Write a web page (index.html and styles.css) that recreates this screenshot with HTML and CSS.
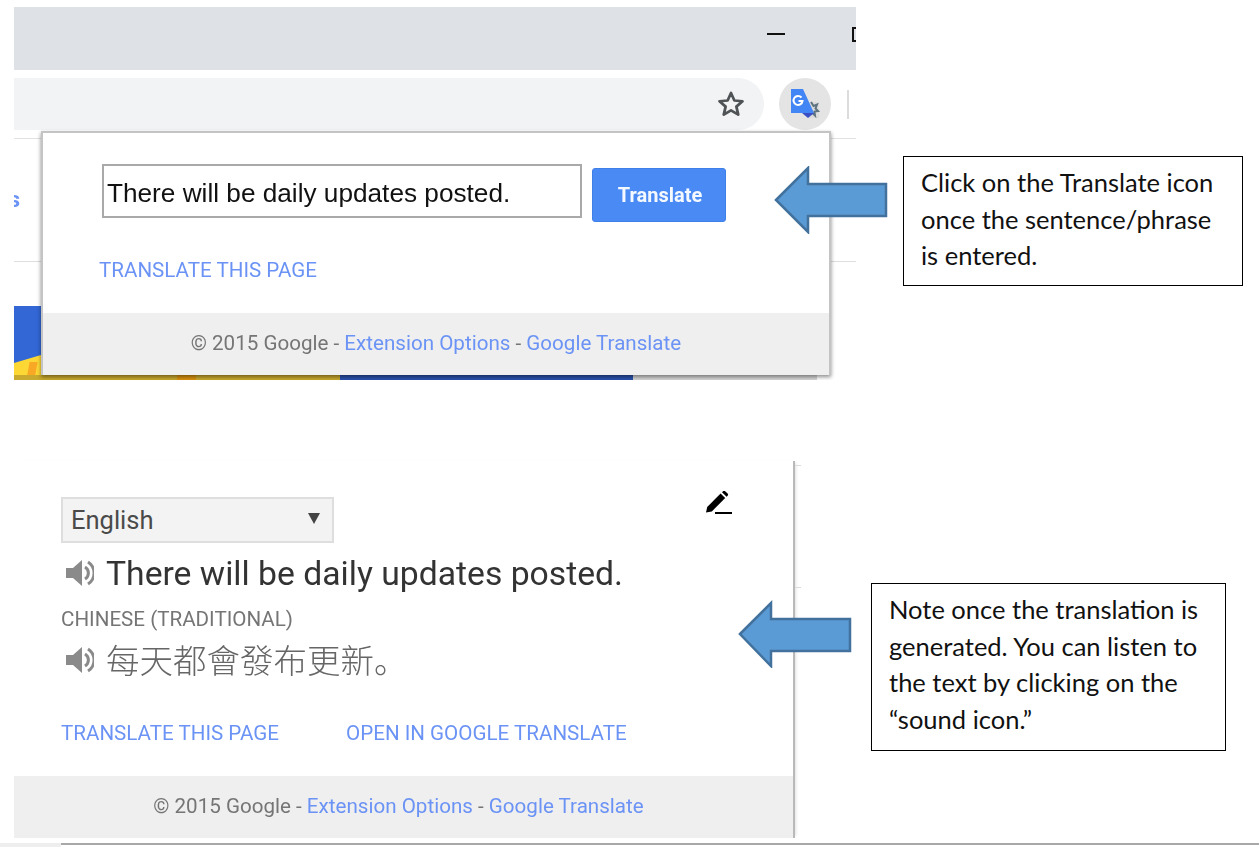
FILE: index.html
```html
<!DOCTYPE html>
<html lang="en">
<head>
<meta charset="utf-8">
<title>Google Translate extension instructions</title>
<link rel="stylesheet" href="styles.css">
</head>
<body>
<main class="canvas">

  <section class="shot-top">
    <div class="tabstrip">
      <span class="win-min"></span>
      <span class="win-max"></span>
    </div>
    <div class="toolbar">
      <div class="omnibox">
        <svg class="star" viewBox="0 0 24 24" width="30" height="30"><path d="M12 3.2l2.7 6 6.5.6-4.9 4.3 1.5 6.4L12 17.1l-5.8 3.4 1.5-6.4-4.9-4.3 6.5-.6z" fill="none" stroke="#505356" stroke-width="2.2" stroke-linejoin="round"/></svg>
      </div>
      <div class="ext-btn">
        <svg viewBox="0 0 32 32" width="32" height="32">
          <path d="M16 14h14v16H20z" fill="#dcdcdc"/>
          <path d="M22 14l2.5 4 3.5-1.500-1.500 4 2.500 2.500-3.500.5.500 4-3.500-3.500" fill="none" stroke="#5d7480" stroke-width="2"/>
          <path d="M2 1h12l11 24H2z" fill="#4285f4"/>
          <path d="M13 25h12l-6 5z" fill="#3a4fc4"/>
          <path d="M12.500 9.500a4.500 4.500 0 1 0 1 3.500H9.500" fill="none" stroke="#fff" stroke-width="2"/>
        </svg>
      </div>
      <span class="toolbar-sep"></span>
    </div>
    <div class="page">
      <div class="page-row"><a class="page-frag">s</a></div>
      <div class="banner">
        <span class="banner-yellow"></span>
        <span class="banner-stripe"></span>
        <span class="banner-under"></span>
        <span class="banner-orange"></span>
        <span class="banner-blue"></span>
        <span class="banner-grey"></span>
      </div>
    </div>

    <div class="popup popup-small">
      <div class="popup-body">
        <div class="query">
          <div class="query-input">There will be daily updates posted.</div>
          <button class="translate-btn">Translate</button>
        </div>
        <a class="link link-first">TRANSLATE THIS PAGE</a>
      </div>
      <footer class="popup-foot">© 2015 Google - <a>Extension Options</a> - <a>Google Translate</a></footer>
    </div>
  </section>

  <section class="shot-bottom">
    <div class="result">
      <div class="result-head">
        <div class="lang-select"><span>English</span><i class="caret"></i></div>
        <svg class="pencil" viewBox="0 0 28 24" width="28" height="24">
          <path d="M1 21.500l1.200-5.500L15.600 2.600l4.600 4.400L6.800 20.500z" fill="#000"/>
          <path d="M17 1.200l1-1a1.600 1.600 0 0 1 2.200 0l2.400 2.300a1.600 1.600 0 0 1 0 2.200l-1 1z" fill="#000"/>
          <path d="M10 22h17" stroke="#000" stroke-width="2"/>
        </svg>
      </div>
      <div class="line-src">
        <svg class="spk" viewBox="0 0 28 28" width="28" height="28"><path d="M0 9h7l9-8v26l-9-8H0z" fill="#8a8a8a"/><path d="M19 8a7 7 0 0 1 0 12M22 3a13 13 0 0 1 0 22" fill="none" stroke="#8a8a8a" stroke-width="3"/></svg>
        <span>There will be daily updates posted.</span>
      </div>
      <div class="lang-label">CHINESE (TRADITIONAL)</div>
      <div class="line-dst">
        <svg class="spk spk-dst" viewBox="0 0 28 28" width="28" height="28"><path d="M0 9h7l9-8v26l-9-8H0z" fill="#8a8a8a"/><path d="M19 8a7 7 0 0 1 0 12M22 3a13 13 0 0 1 0 22" fill="none" stroke="#8a8a8a" stroke-width="3"/></svg>
        <span>每天都會發布更新。</span>
      </div>
      <div class="result-links">
        <a class="link">TRANSLATE THIS PAGE</a>
        <a class="link">OPEN IN GOOGLE TRANSLATE</a>
      </div>
    </div>
    <footer class="popup-foot foot-bottom">© 2015 Google - <a>Extension Options</a> - <a>Google Translate</a></footer>
    <span class="tick tick-a"></span>
    <span class="tick tick-b"></span>
  </section>

  <div class="bottom-strip"><span class="strip-left"></span><span class="strip-line"></span></div>

  <svg class="arrow arrow-a" viewBox="0 0 114 68" width="114" height="68"><path d="M2 34L34 2v16h78v32H34v16z" fill="#5b9bd5" stroke="#41719c" stroke-width="2.500"/></svg>
  <svg class="arrow arrow-b" viewBox="0 0 114 68" width="114" height="68"><path d="M2 34L33 3v16h79v32H33v15z" fill="#5b9bd5" stroke="#41719c" stroke-width="2.500"/></svg>

  <aside class="note note-a">Click on the Translate icon once the sentence/phrase is entered.</aside>
  <aside class="note note-b">Note once the translation is generated. You can listen to the text by clicking on the “sound icon.”</aside>
</main>
</body>
</html>
```

FILE: styles.css
```css
* { box-sizing: border-box; }
html, body { margin: 0; padding: 0; background: #fff; }
body { font-family: Roboto, "Liberation Sans", sans-serif; }
a { color: #6b93f5; }

.canvas { position: relative; width: 1259px; height: 847px; overflow: hidden; }

/* ---------- top screenshot ---------- */
.shot-top {
  position: absolute; left: 14px; top: 7px;
  width: 842px; height: 373px;
  overflow: hidden;
  display: flex; flex-direction: column;
  filter: blur(0.35px);
}
.tabstrip { position: relative; height: 63px; flex: none; background: #dee1e6; }
.win-min { position: absolute; left: 753px; top: 26px; width: 18px; height: 2px; background: #111; }
.win-max { position: absolute; left: 838px; top: 20px; width: 10px; height: 15px; border: 2px solid #111; }

.toolbar {
  flex: none; height: 69px; padding-top: 8px;
  display: flex; align-items: flex-start;
  border-bottom: 1px solid #e2e2e2;
}
.omnibox {
  width: 750px; height: 52px;
  background: #f1f3f4;
  border-radius: 0 26px 26px 0;
  display: flex; align-items: center; justify-content: flex-end;
  padding-right: 18px;
}
.star { display: block; }
.ext-btn {
  margin-left: 15px; width: 52px; height: 52px; border-radius: 50%;
  background: #e4e4e4;
  display: flex; align-items: center; justify-content: center;
}
.toolbar-sep { margin: 12px 0 0 16px; width: 2px; height: 29px; background: #dcdcdc; }

.page { flex: 1; display: flex; flex-direction: column; }
.page-row { height: 123px; border-bottom: 1px solid #dedede; padding-top: 48px; }
.page-frag {
  display: block; width: 6px; overflow: hidden;
  font-size: 22px; line-height: 26px; font-weight: 700; color: #6b93f5;
  direction: rtl;
}
.banner { margin-top: 44px; flex: 1; width: 803px; position: relative; background: #3367d6; }
.banner-yellow {
  position: absolute; left: 0; bottom: 0; width: 27px; height: 25px;
  background: #fdd835;
  clip-path: polygon(0 8px, 100% 0, 100% 100%, 0 100%);
}
.banner-stripe {
  position: absolute; left: 14px; bottom: 0; width: 8px; height: 18px;
  background: #f9a825; transform: skewX(-10deg);
}
.banner-under { position: absolute; left: 0; bottom: 0; width: 326px; height: 5px; background: #c9a92e; }
.banner-orange { position: absolute; left: 163px; bottom: 0; width: 19px; height: 5px; background: #d9920f; }
.banner-blue { position: absolute; left: 326px; bottom: 0; width: 293px; height: 5px; background: #2b52ad; }
.banner-grey { position: absolute; left: 619px; bottom: 0; width: 184px; height: 5px; background: #d6d6d6; }

/* ---------- popup ---------- */
.popup {
  background: #fff;
  display: flex; flex-direction: column;
}
.popup-small {
  position: absolute; left: 27px; top: 124px;
  width: 790px; height: 244px;
  border: 2px solid #c4c4c4; border-bottom: 0;
  box-shadow: 0 2px 4px rgba(0,0,0,.45);
}
.popup-body { flex: 1; padding: 31px 0 0 59px; }
.query { display: flex; align-items: flex-start; }
.query-input {
  width: 480px; height: 54px;
  border: 2px solid #a9a9a9;
  padding-left: 3px;
  font-family: "Liberation Sans", Arial, sans-serif;
  font-size: 26.2px; line-height: 54px; color: #111;
  white-space: nowrap;
}
.translate-btn {
  margin: 4px 0 0 10px;
  width: 134px; height: 54px;
  background: #4a8af4;
  border: 1px solid #3f7fe8; border-radius: 3px;
  color: #f4f8ff;
  font-family: Roboto, sans-serif;
  font-size: 20px; font-weight: 700;
  padding: 0 0 0 2px;
}
.link { font-size: 20.6px; line-height: 24px; color: #6b93f5; white-space: nowrap; }
.link-first { display: block; margin: 36px 0 0 -3px; }

.popup-foot {
  height: 62px; flex: none;
  background: #efefef;
  color: #757575;
  font-size: 20.6px; line-height: 60px;
  text-align: center;
  white-space: nowrap;
}

/* ---------- bottom screenshot ---------- */
.shot-bottom {
  position: absolute; left: 14px; top: 461px;
  width: 781px; height: 377px;
  border-right: 2px solid #b9b9b9;
  display: flex; flex-direction: column;
  box-shadow: 3px 0 3px -2px rgba(0,0,0,.12);
  filter: blur(0.35px);
}
.result { flex: 1; padding: 36px 0 0 47px; display: flex; flex-direction: column; }
.result-head { display: flex; align-items: flex-start; justify-content: space-between; padding-right: 60px; height: 46px; }
.pencil { margin-top: -6px; display: block; }
.lang-select {
  width: 273px; height: 46px;
  background: #f3f3f3;
  border: 2px solid #dedede;
  padding: 0 12px 0 8px;
  display: flex; align-items: center; justify-content: space-between;
  font-size: 25.5px; color: #4a4a4a;
}
.caret {
  display: block; width: 0; height: 0;
  border-left: 6px solid transparent; border-right: 6px solid transparent;
  border-top: 11px solid #444;
  margin-top: -3px;
}
.line-src, .line-dst { display: flex; align-items: center; }
.line-src { height: 42px; margin-top: 9px; font-size: 33.7px; color: #333; white-space: nowrap; }
.spk { flex: none; margin: 0 12px 0 5px; display: block; }
.spk-dst { margin-top: 4px; }
.lang-label { margin-top: 12px; font-size: 20.6px; line-height: 26px; color: #757575; }
.line-dst {
  height: 42px; margin-top: 5px;
  font-family: "Noto Sans CJK SC", "Noto Sans CJK TC", sans-serif;
  font-size: 33.5px; font-weight: 300; color: #666; white-space: nowrap;
}
.result-links { display: flex; gap: 67px; margin-top: 42px; }
.foot-bottom { height: 62px; padding-right: 10px; }

.tick { position: absolute; left: 781px; width: 6px; height: 1px; background: #dcdcdc; }
.tick-a { top: 4px; }
.tick-b { top: 126px; }

.bottom-strip { position: absolute; left: 0; top: 843px; width: 1259px; height: 4px; display: flex; }
.strip-left { width: 61px; background: #eee; }
.strip-line { flex: 1; border-top: 2px solid #a8a8a8; }

/* ---------- annotations ---------- */
.arrow { position: absolute; display: block; }
.arrow-a { left: 774px; top: 166px; }
.arrow-b { left: 738px; top: 600px; }

.note {
  position: absolute;
  background: #fff;
  border: 1.5px solid #000;
  font-family: Lato, "Open Sans", sans-serif;
  font-size: 25.5px; line-height: 36.5px; color: #111;
}
.note-a { left: 903px; top: 156px; width: 340px; height: 130px; padding: 7px 16px 0 17px; }
.note-b { left: 871px; top: 583px; width: 355px; height: 168px; padding: 7px 16px 0 17px; }
```
